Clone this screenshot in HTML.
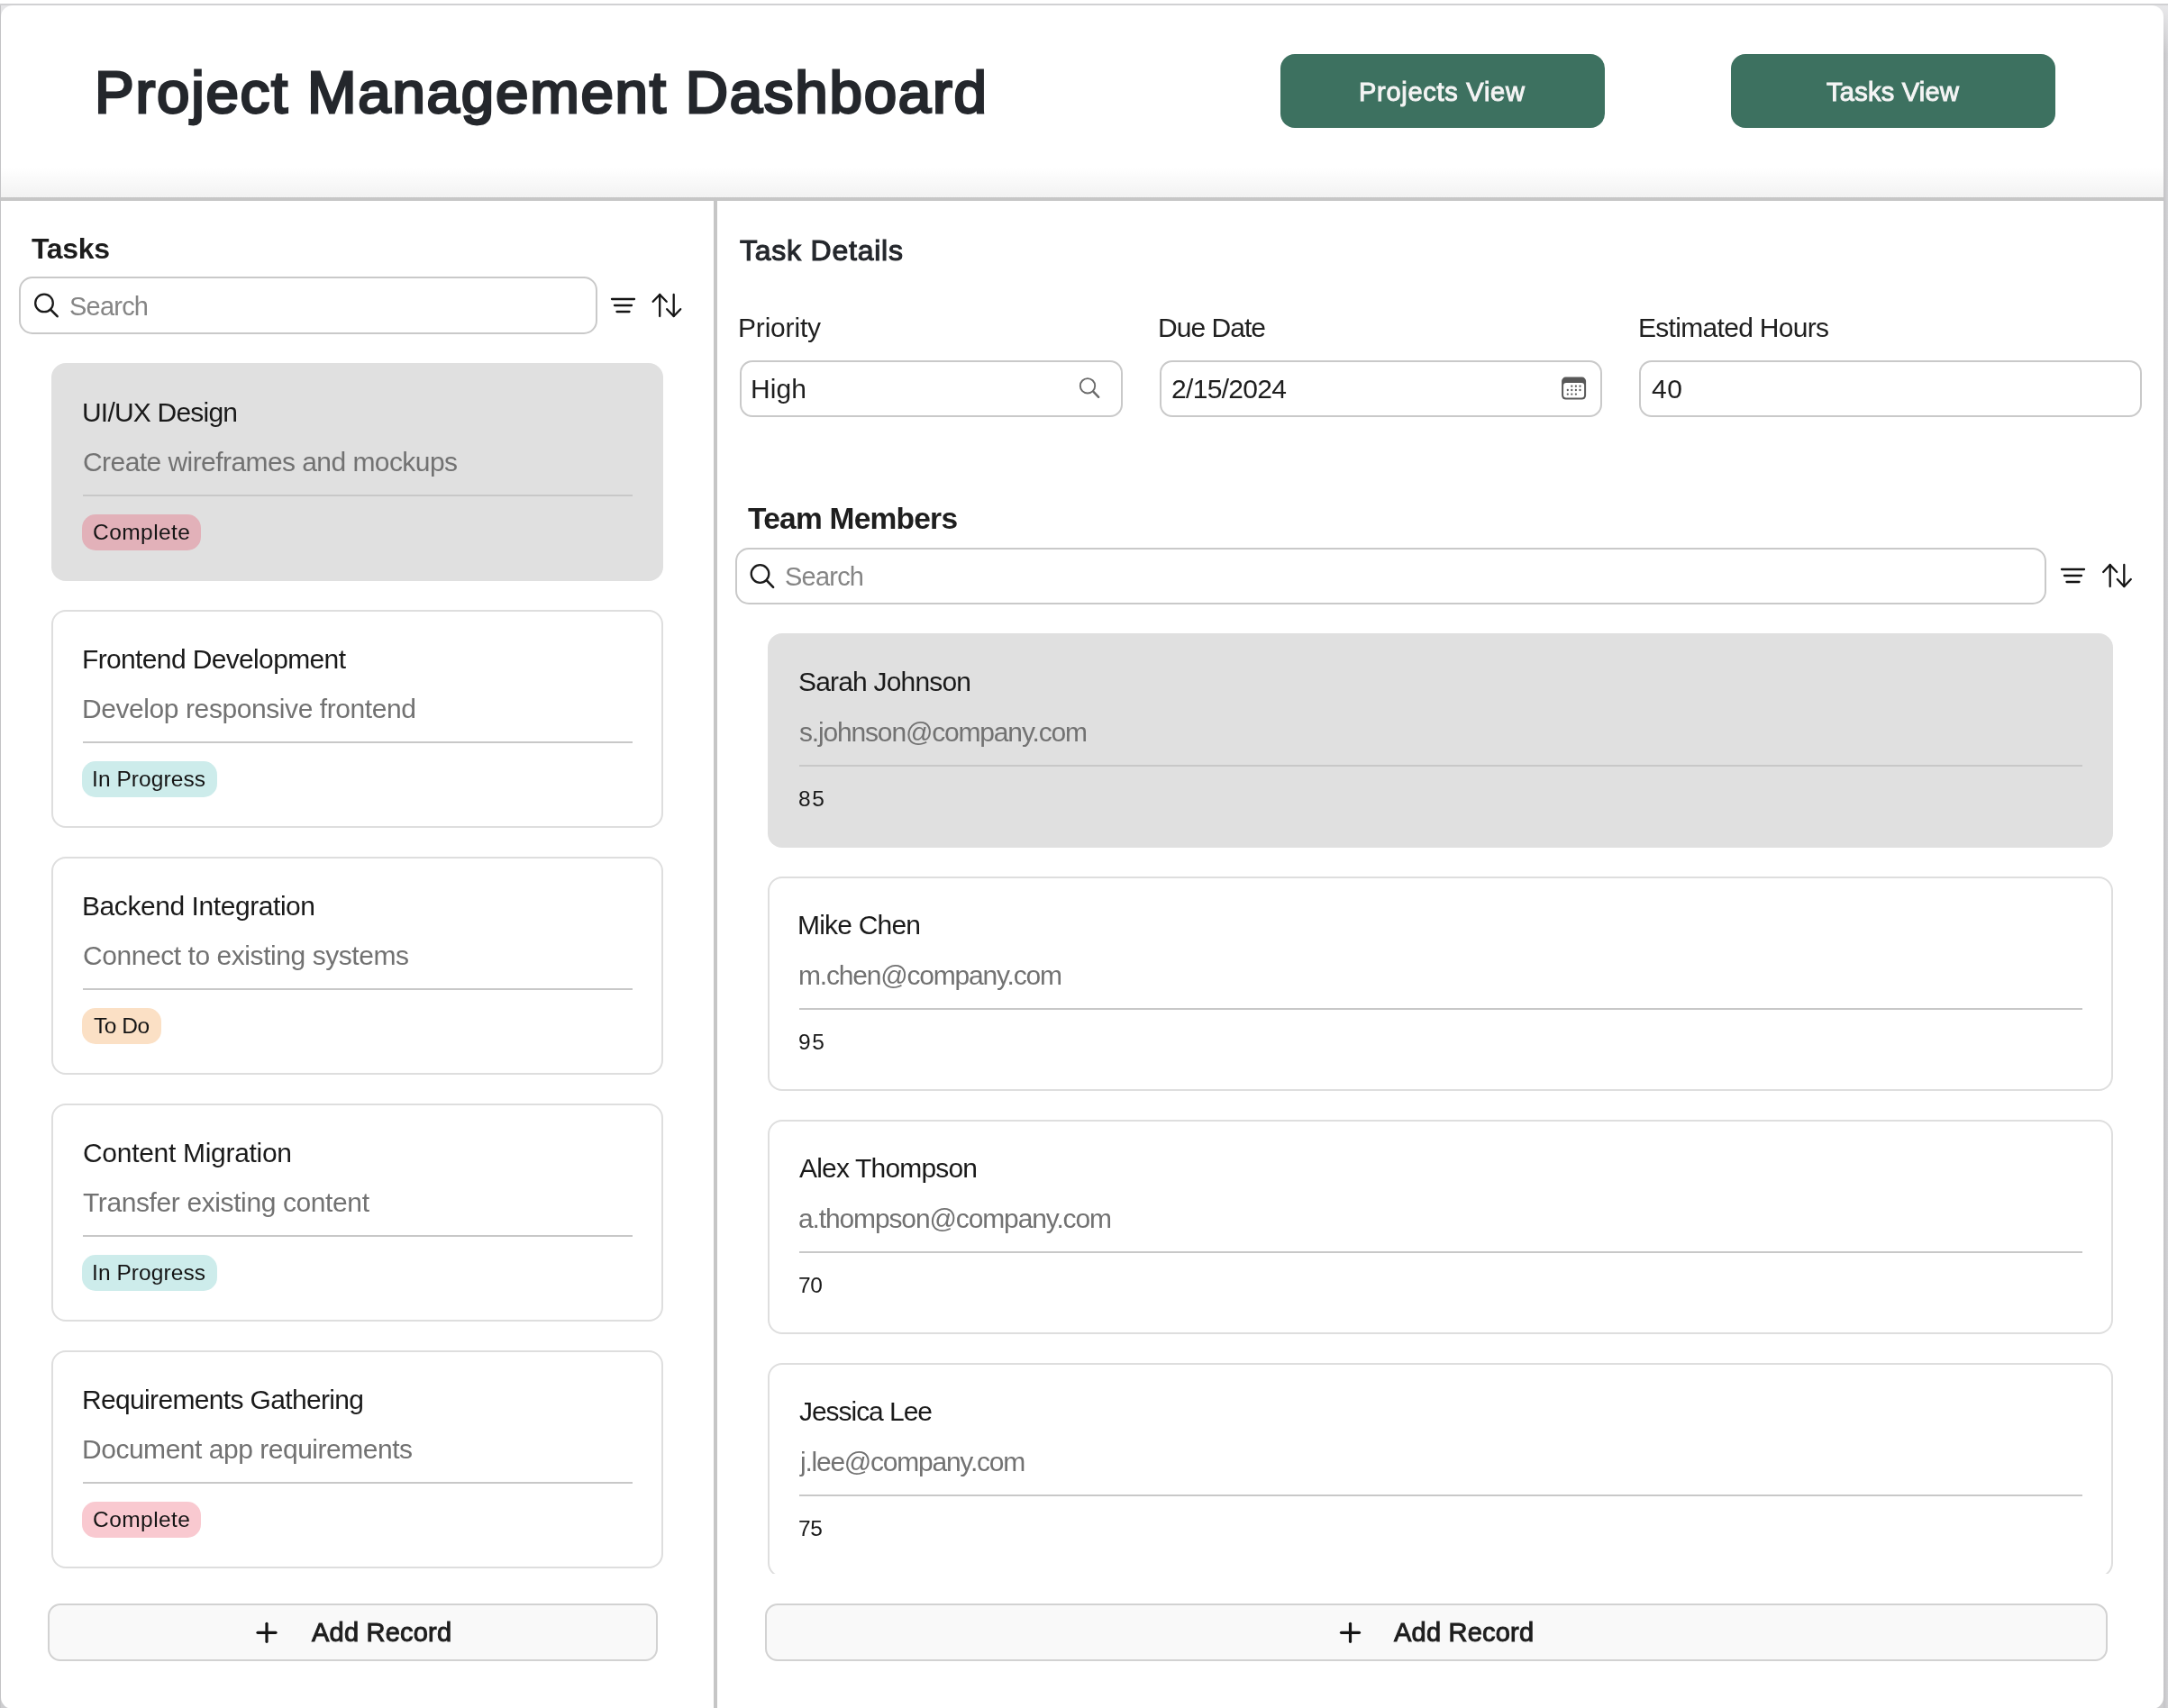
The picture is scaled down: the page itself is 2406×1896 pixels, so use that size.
<!DOCTYPE html>
<html><head><meta charset="utf-8"><style>
html,body{margin:0;padding:0;width:2406px;height:1896px;overflow:hidden;background:#fff}
body{position:relative;font-family:"Liberation Sans",sans-serif}
.t{position:absolute;white-space:nowrap;will-change:transform}
</style></head><body>
<div style="position:absolute;left:0px;top:4px;width:2406px;height:2px;box-sizing:border-box;background:#d1d1d3"></div><div style="position:absolute;left:0px;top:6px;width:2406px;height:1890px;box-sizing:border-box;background:linear-gradient(#e6e6e8,#e6e6e8 60px,#cdcdcf 1860px)"></div><div style="position:absolute;left:0px;top:6px;width:1px;height:1890px;box-sizing:border-box;background:#c3c3c5"></div><div style="position:absolute;left:2401px;top:6px;width:5px;height:1890px;box-sizing:border-box;background:linear-gradient(to right,#c4c3c6,#d3d3d6)"></div><div style="position:absolute;left:2401px;top:6px;width:5px;height:54px;box-sizing:border-box;background:linear-gradient(#e8e8ea,rgba(232,232,234,0))"></div><div style="position:absolute;left:1px;top:6px;width:2400px;height:1891px;box-sizing:border-box;background:#fff;border-radius:13px"></div><div style="position:absolute;left:1px;top:186px;width:2400px;height:33px;box-sizing:border-box;background:linear-gradient(rgba(0,0,0,0),rgba(0,0,0,0.05))"></div><div style="position:absolute;left:1px;top:219px;width:2400px;height:4px;box-sizing:border-box;background:#c6c6c6"></div><div style="position:absolute;left:792px;top:223px;width:4px;height:1673px;box-sizing:border-box;background:#c6c6c6"></div><div id="t0" class="t" style="left:105.00px;top:69.60px;font-size:65.5px;line-height:65.5px;letter-spacing:1.741px;color:#24272c;-webkit-text-stroke:2.8px #24272c;">Project Management Dashboard</div><div style="position:absolute;left:1421px;top:60px;width:360px;height:82px;box-sizing:border-box;background:#3d7160;border-radius:16px"></div><div id="t1" class="t" style="left:1508.00px;top:88.10px;font-size:29.0px;line-height:29.0px;letter-spacing:0.725px;color:#f4f4f4;-webkit-text-stroke:1.0px #f4f4f4;">Projects View</div><div style="position:absolute;left:1921px;top:60px;width:360px;height:82px;box-sizing:border-box;background:#3d7160;border-radius:16px"></div><div id="t2" class="t" style="left:2027.00px;top:88.10px;font-size:29.0px;line-height:29.0px;letter-spacing:0.256px;color:#f4f4f4;-webkit-text-stroke:1.0px #f4f4f4;">Tasks View</div><div id="t3" class="t" style="left:35.00px;top:260.41px;font-size:32.0px;line-height:32.0px;letter-spacing:-0.350px;color:#1c1c1c;font-weight:bold;">Tasks</div><div style="position:absolute;left:21px;top:307px;width:641.5px;height:64px;box-sizing:border-box;border:2px solid #c9c9c9;border-radius:15px;background:#fff"></div><svg style="position:absolute;left:0;top:0" width="2406" height="1896"><circle cx="49" cy="336.4" r="9.8" fill="none" stroke="#1a1a1a" stroke-width="2.3"/><line x1="56.4" y1="343.8" x2="63.6" y2="351.2" stroke="#1a1a1a" stroke-width="2.6" stroke-linecap="round"/></svg><div id="t4" class="t" style="left:77.00px;top:326.20px;font-size:29.0px;line-height:29.0px;letter-spacing:-0.780px;color:#858585;">Search</div><div style="position:absolute;left:57px;top:403px;width:679px;height:242px;box-sizing:border-box;background:#e0e0e0;border-radius:16px"></div><div id="t5" class="t" style="left:91.00px;top:442.51px;font-size:30px;line-height:30px;letter-spacing:-0.791px;color:#1a1a1a;">UI/UX Design</div><div id="t6" class="t" style="left:92.00px;top:498.31px;font-size:30px;line-height:30px;letter-spacing:-0.564px;color:#727272;">Create wireframes and mockups</div><div style="position:absolute;left:92px;top:549px;width:610px;height:2px;box-sizing:border-box;background:#c8c8c8"></div><div style="position:absolute;left:91px;top:571px;width:132px;height:40px;box-sizing:border-box;background:#e2b1b9;border-radius:15px"></div><div id="t7" class="t" style="left:103.00px;top:579.20px;font-size:24.5px;line-height:24.5px;letter-spacing:0.443px;color:#151515;">Complete</div><div style="position:absolute;left:57px;top:677px;width:679px;height:242px;box-sizing:border-box;background:#fff;border:2px solid #dedede;border-radius:16px"></div><div id="t8" class="t" style="left:91.00px;top:716.51px;font-size:30px;line-height:30px;letter-spacing:-0.642px;color:#1a1a1a;">Frontend Development</div><div id="t9" class="t" style="left:91.00px;top:772.31px;font-size:30px;line-height:30px;letter-spacing:-0.419px;color:#727272;">Develop responsive frontend</div><div style="position:absolute;left:92px;top:823px;width:610px;height:2px;box-sizing:border-box;background:#c8c8c8"></div><div style="position:absolute;left:91px;top:845px;width:150px;height:40px;box-sizing:border-box;background:#cdeceb;border-radius:15px"></div><div id="t10" class="t" style="left:102.00px;top:853.20px;font-size:24.5px;line-height:24.5px;letter-spacing:0.070px;color:#151515;">In Progress</div><div style="position:absolute;left:57px;top:951px;width:679px;height:242px;box-sizing:border-box;background:#fff;border:2px solid #dedede;border-radius:16px"></div><div id="t11" class="t" style="left:91.00px;top:990.51px;font-size:30px;line-height:30px;letter-spacing:-0.433px;color:#1a1a1a;">Backend Integration</div><div id="t12" class="t" style="left:92.00px;top:1046.31px;font-size:30px;line-height:30px;letter-spacing:-0.442px;color:#727272;">Connect to existing systems</div><div style="position:absolute;left:92px;top:1097px;width:610px;height:2px;box-sizing:border-box;background:#c8c8c8"></div><div style="position:absolute;left:91px;top:1119px;width:88px;height:40px;box-sizing:border-box;background:#fbe0c5;border-radius:15px"></div><div id="t13" class="t" style="left:104.00px;top:1127.20px;font-size:24.5px;line-height:24.5px;letter-spacing:-0.500px;color:#151515;">To Do</div><div style="position:absolute;left:57px;top:1225px;width:679px;height:242px;box-sizing:border-box;background:#fff;border:2px solid #dedede;border-radius:16px"></div><div id="t14" class="t" style="left:92.00px;top:1264.51px;font-size:30px;line-height:30px;letter-spacing:-0.300px;color:#1a1a1a;">Content Migration</div><div id="t15" class="t" style="left:92.00px;top:1320.31px;font-size:30px;line-height:30px;letter-spacing:-0.392px;color:#727272;">Transfer existing content</div><div style="position:absolute;left:92px;top:1371px;width:610px;height:2px;box-sizing:border-box;background:#c8c8c8"></div><div style="position:absolute;left:91px;top:1393px;width:150px;height:40px;box-sizing:border-box;background:#cdeceb;border-radius:15px"></div><div id="t16" class="t" style="left:102.00px;top:1401.20px;font-size:24.5px;line-height:24.5px;letter-spacing:0.070px;color:#151515;">In Progress</div><div style="position:absolute;left:57px;top:1499px;width:679px;height:242px;box-sizing:border-box;background:#fff;border:2px solid #dedede;border-radius:16px"></div><div id="t17" class="t" style="left:91.00px;top:1538.51px;font-size:30px;line-height:30px;letter-spacing:-0.657px;color:#1a1a1a;">Requirements Gathering</div><div id="t18" class="t" style="left:91.00px;top:1594.31px;font-size:30px;line-height:30px;letter-spacing:-0.479px;color:#727272;">Document app requirements</div><div style="position:absolute;left:92px;top:1645px;width:610px;height:2px;box-sizing:border-box;background:#c8c8c8"></div><div style="position:absolute;left:91px;top:1667px;width:132px;height:40px;box-sizing:border-box;background:#f9c9d0;border-radius:15px"></div><div id="t19" class="t" style="left:103.00px;top:1675.20px;font-size:24.5px;line-height:24.5px;letter-spacing:0.443px;color:#151515;">Complete</div><div style="position:absolute;left:53px;top:1780px;width:677px;height:64px;box-sizing:border-box;background:#f9f9f9;border:2px solid #d2d2d2;border-radius:14px"></div><div id="t20" class="t" style="left:346.00px;top:1797.81px;font-size:29.0px;line-height:29.0px;letter-spacing:0.211px;color:#1e1e1e;-webkit-text-stroke:1.0px #1e1e1e;">Add Record</div><div id="t21" class="t" style="left:821.00px;top:261.85px;font-size:32.0px;line-height:32.0px;letter-spacing:0.773px;color:#24272c;-webkit-text-stroke:1.1px #24272c;">Task Details</div><div id="t22" class="t" style="left:819.00px;top:348.60px;font-size:30px;line-height:30px;letter-spacing:-0.186px;color:#202020;">Priority</div><div id="t23" class="t" style="left:1285.00px;top:348.60px;font-size:30px;line-height:30px;letter-spacing:-0.957px;color:#202020;">Due Date</div><div id="t24" class="t" style="left:1818.00px;top:348.60px;font-size:30px;line-height:30px;letter-spacing:-0.693px;color:#202020;">Estimated Hours</div><div style="position:absolute;left:821px;top:400px;width:425px;height:63px;box-sizing:border-box;border:2px solid #c9c9c9;border-radius:14px;background:#fff"></div><div id="t25" class="t" style="left:833.00px;top:416.60px;font-size:30px;line-height:30px;letter-spacing:0.100px;color:#1e1e1e;">High</div><div style="position:absolute;left:1287px;top:400px;width:491px;height:63px;box-sizing:border-box;border:2px solid #c9c9c9;border-radius:14px;background:#fff"></div><div id="t26" class="t" style="left:1300.00px;top:416.60px;font-size:30px;line-height:30px;letter-spacing:-0.688px;color:#1e1e1e;">2/15/2024</div><div style="position:absolute;left:1819px;top:400px;width:558px;height:63px;box-sizing:border-box;border:2px solid #c9c9c9;border-radius:14px;background:#fff"></div><div id="t27" class="t" style="left:1833.00px;top:416.60px;font-size:30px;line-height:30px;letter-spacing:0.600px;color:#1e1e1e;">40</div><svg style="position:absolute;left:0;top:0" width="2406" height="1896"><circle cx="1207" cy="428.3" r="8.2" fill="none" stroke="#6a6a6a" stroke-width="1.9"/><line x1="1213.3" y1="434.6" x2="1219.2" y2="440.8" stroke="#6a6a6a" stroke-width="2.4" stroke-linecap="round"/></svg><svg style="position:absolute;left:1733px;top:418px" width="28" height="27" viewBox="0 0 28 27"><rect x="0.1" y="0.6" width="27" height="25" rx="4.5" fill="#585858"/><rect x="2.1" y="6.9" width="23" height="16.7" rx="3" fill="#fff"/><circle cx="11.3" cy="10.7" r="1.15" fill="#585858"/><circle cx="15.9" cy="10.7" r="1.15" fill="#585858"/><circle cx="20.5" cy="10.7" r="1.15" fill="#585858"/><circle cx="6.8" cy="15" r="1.15" fill="#585858"/><circle cx="11.3" cy="15" r="1.15" fill="#585858"/><circle cx="15.9" cy="15" r="1.15" fill="#585858"/><circle cx="20.5" cy="15" r="1.15" fill="#585858"/><circle cx="6.8" cy="19.6" r="1.15" fill="#585858"/><circle cx="11.3" cy="19.6" r="1.15" fill="#585858"/><circle cx="15.9" cy="19.6" r="1.15" fill="#585858"/></svg><div id="t28" class="t" style="left:830.00px;top:559.32px;font-size:33.5px;line-height:33.5px;letter-spacing:-0.764px;color:#1e1e1e;font-weight:bold;">Team Members</div><div style="position:absolute;left:816px;top:608px;width:1455px;height:63px;box-sizing:border-box;border:2px solid #c9c9c9;border-radius:15px;background:#fff"></div><svg style="position:absolute;left:0;top:0" width="2406" height="1896"><circle cx="843.5" cy="637" r="9.8" fill="none" stroke="#1a1a1a" stroke-width="2.3"/><line x1="850.9" y1="644.4" x2="858.1" y2="651.8" stroke="#1a1a1a" stroke-width="2.6" stroke-linecap="round"/></svg><div id="t29" class="t" style="left:871.00px;top:626.20px;font-size:29.0px;line-height:29.0px;letter-spacing:-0.780px;color:#858585;">Search</div><div style="position:absolute;left:0;top:0;width:2406px;height:1747px;overflow:hidden"><div style="position:absolute;left:852px;top:703px;width:1493px;height:238px;box-sizing:border-box;background:#e0e0e0;border-radius:16px"></div><div id="t30" class="t" style="left:886.00px;top:741.81px;font-size:30px;line-height:30px;letter-spacing:-0.817px;color:#1a1a1a;">Sarah Johnson</div><div id="t31" class="t" style="left:887.00px;top:798.01px;font-size:30px;line-height:30px;letter-spacing:-1.170px;color:#727272;">s.johnson@company.com</div><div style="position:absolute;left:887px;top:849px;width:1424px;height:2px;box-sizing:border-box;background:#c8c8c8"></div><div id="t32" class="t" style="left:886.00px;top:874.81px;font-size:24.5px;line-height:24.5px;letter-spacing:1.700px;color:#1a1a1a;">85</div><div style="position:absolute;left:852px;top:973px;width:1493px;height:238px;box-sizing:border-box;background:#fff;border:2px solid #dedede;border-radius:16px"></div><div id="t33" class="t" style="left:885.00px;top:1011.81px;font-size:30px;line-height:30px;letter-spacing:-0.800px;color:#1a1a1a;">Mike Chen</div><div id="t34" class="t" style="left:886.00px;top:1068.01px;font-size:30px;line-height:30px;letter-spacing:-1.194px;color:#727272;">m.chen@company.com</div><div style="position:absolute;left:887px;top:1119px;width:1424px;height:2px;box-sizing:border-box;background:#c8c8c8"></div><div id="t35" class="t" style="left:886.00px;top:1144.81px;font-size:24.5px;line-height:24.5px;letter-spacing:1.700px;color:#1a1a1a;">95</div><div style="position:absolute;left:852px;top:1243px;width:1493px;height:238px;box-sizing:border-box;background:#fff;border:2px solid #dedede;border-radius:16px"></div><div id="t36" class="t" style="left:887.00px;top:1281.81px;font-size:30px;line-height:30px;letter-spacing:-0.825px;color:#1a1a1a;">Alex Thompson</div><div id="t37" class="t" style="left:886.00px;top:1338.01px;font-size:30px;line-height:30px;letter-spacing:-1.129px;color:#727272;">a.thompson@company.com</div><div style="position:absolute;left:887px;top:1389px;width:1424px;height:2px;box-sizing:border-box;background:#c8c8c8"></div><div id="t38" class="t" style="left:886.00px;top:1414.81px;font-size:24.5px;line-height:24.5px;letter-spacing:-0.300px;color:#1a1a1a;">70</div><div style="position:absolute;left:852px;top:1513px;width:1493px;height:238px;box-sizing:border-box;background:#fff;border:2px solid #dedede;border-radius:16px"></div><div id="t39" class="t" style="left:887.00px;top:1551.81px;font-size:30px;line-height:30px;letter-spacing:-1.040px;color:#1a1a1a;">Jessica Lee</div><div id="t40" class="t" style="left:888.00px;top:1608.01px;font-size:30px;line-height:30px;letter-spacing:-1.238px;color:#727272;">j.lee@company.com</div><div style="position:absolute;left:887px;top:1659px;width:1424px;height:2px;box-sizing:border-box;background:#c8c8c8"></div><div id="t41" class="t" style="left:886.00px;top:1684.81px;font-size:24.5px;line-height:24.5px;letter-spacing:-0.300px;color:#1a1a1a;">75</div></div><div style="position:absolute;left:849px;top:1780px;width:1490px;height:64px;box-sizing:border-box;background:#f9f9f9;border:2px solid #d2d2d2;border-radius:14px"></div><div id="t42" class="t" style="left:1547.00px;top:1797.81px;font-size:29.0px;line-height:29.0px;letter-spacing:0.211px;color:#1e1e1e;-webkit-text-stroke:1.0px #1e1e1e;">Add Record</div>
<svg style="position:absolute;left:0;top:0" width="2406" height="1896"><g fill="none" stroke="#141414" stroke-width="2.3" stroke-linecap="round" stroke-linejoin="round"><line x1="679" y1="332" x2="704" y2="332"/><line x1="682" y1="339" x2="701" y2="339"/><line x1="684.5" y1="346" x2="698.5" y2="346"/><polyline points="724.7,334.8 732.2,327 739.7,334.8"/><line x1="732.2" y1="327" x2="732.2" y2="351"/><polyline points="740.2,343.2 747.7,351 755.2,343.2"/><line x1="747.7" y1="327" x2="747.7" y2="351"/><line x1="286" y1="1812.3" x2="306" y2="1812.3" style="stroke-width:3.2"/><line x1="296" y1="1802.3" x2="296" y2="1822.3" style="stroke-width:3.2"/><line x1="2288" y1="632" x2="2313" y2="632"/><line x1="2291" y1="639" x2="2310" y2="639"/><line x1="2293.5" y1="646" x2="2307.5" y2="646"/><polyline points="2334.2,635 2341.7,627 2349.2,635"/><line x1="2341.7" y1="627" x2="2341.7" y2="651"/><polyline points="2349.8,643 2357.3,651 2364.8,643"/><line x1="2357.3" y1="627" x2="2357.3" y2="651"/><line x1="1488.5" y1="1812.3" x2="1508.5" y2="1812.3" style="stroke-width:3.2"/><line x1="1498.5" y1="1802.3" x2="1498.5" y2="1822.3" style="stroke-width:3.2"/></g></svg>
</body></html>
